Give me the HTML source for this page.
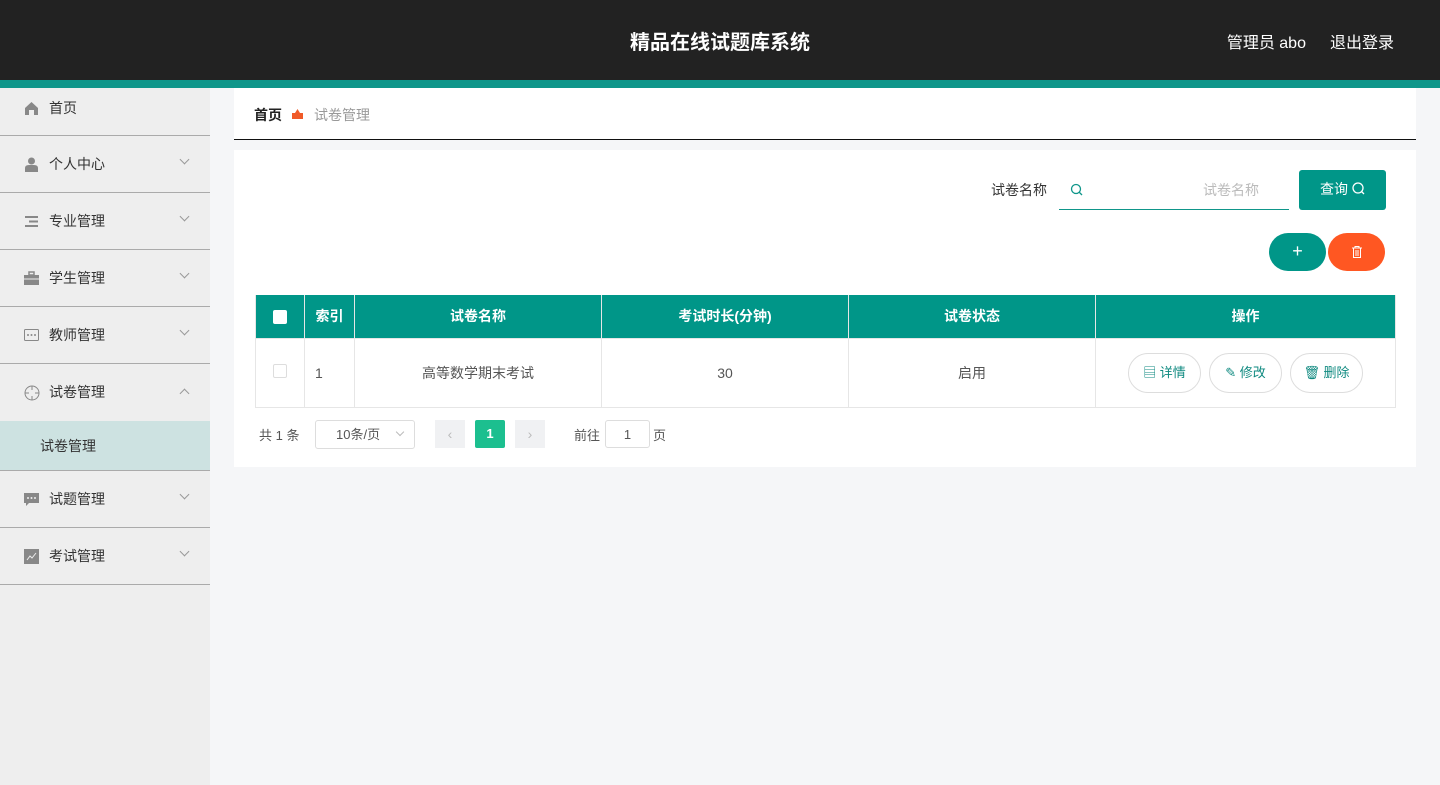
<!DOCTYPE html>
<html><head><meta charset="utf-8"><style>
*{box-sizing:border-box;margin:0;padding:0}
body{width:1440px;height:785px;overflow:hidden;background:#f5f6f8;font-family:"Liberation Sans","Noto Sans CJK SC",sans-serif;font-size:14px;color:#333;position:relative}
.hd{position:absolute;left:0;top:0;width:1440px;height:80px;background:#222;color:#fff}
.hd .t{position:absolute;left:0;width:1440px;top:26px;text-align:center;font-size:20px;font-weight:bold}
.hd .r{position:absolute;right:46px;top:29px;font-size:16px}
.bar{position:absolute;top:80px;left:0;width:1440px;height:8px;background:#0f968a}
.sb{position:absolute;left:0;top:88px;width:210px;height:697px;background:#eee}
.it{height:57px;border-bottom:1px solid #aaa;position:relative;font-size:14px;color:#333}
.it span{position:absolute;left:49px;top:18px}
.it i{position:absolute;left:24px;top:21px;width:15px;height:15px}
.it b{position:absolute;right:22px;top:20px;width:7px;height:7px;border-right:1px solid #999;border-bottom:1px solid #999;transform:rotate(45deg)}
.it b.up{transform:rotate(-135deg);top:26px}
.sub{height:50px;background:#cde2e1;border-bottom:1px solid #aaa;position:relative}
.sub span{position:absolute;left:40px;top:15px}
.bc{position:absolute;left:234px;top:88px;width:1182px;height:52px;background:#fff;border-bottom:1px solid #111;font-size:14px}
.main{position:absolute;left:234px;top:150px;width:1182px;height:317px;background:#fff}
table{position:absolute;left:21px;top:145px;width:1141px;border-collapse:collapse;font-size:14px}
th{background:#009688;color:#fff;height:43px;border:1px solid #e6e6e6;border-top:none;font-weight:bold;font-size:14px}
td{height:69px;border:1px solid #e6e6e6;text-align:center;color:#555}
.ob{display:inline-block;width:73px;height:40px;border:1px solid #ddd;border-radius:20px;line-height:38px;color:#0f8a80;font-size:13px;margin:0 2px}
</style></head><body>
<div class="hd"><div class="t">精品在线试题库系统</div><div class="r">管理员 abo<span style="margin-left:24px">退出登录</span></div></div>
<div class="bar"></div>
<div class="sb">
<div class="it" style="height:48px"><i style="top:13px"><svg width="15" height="15"><path d="M1 7L7.5 1 14 7V14H10V9H5V14H1Z" fill="#888"/></svg></i><span style="top:10px">首页</span></div>
<div class="it"><i><svg width="15" height="15"><circle cx="7.5" cy="4" r="3.5" fill="#888"/><path d="M1 15V11Q1 8 5 8H10Q14 8 14 11V15Z" fill="#888"/></svg></i><span>个人中心</span><b></b></div>
<div class="it"><i><svg width="15" height="15"><path d="M1 3H14M5 7.5H14M1 12H14" stroke="#888" stroke-width="2"/></svg></i><span>专业管理</span><b></b></div>
<div class="it"><i><svg width="15" height="15"><rect x="0" y="4" width="15" height="10" fill="#888"/><rect x="5" y="1" width="5" height="3" fill="none" stroke="#888" stroke-width="1.5"/><path d="M0 8H15" stroke="#eee"/></svg></i><span>学生管理</span><b></b></div>
<div class="it"><i><svg width="15" height="15"><rect x="0.5" y="1.5" width="14" height="11" rx="1" fill="none" stroke="#888"/><circle cx="4" cy="7" r="1" fill="#888"/><circle cx="7.5" cy="7" r="1" fill="#888"/><circle cx="11" cy="7" r="1" fill="#888"/></svg></i><span>教师管理</span><b></b></div>
<div class="it" style="border:none"><i><svg width="16" height="16"><circle cx="8" cy="8" r="7" fill="none" stroke="#888"/><path d="M8 1V5M8 11V15M1 8H5M11 8H15" stroke="#888"/></svg></i><span>试卷管理</span><b class="up"></b></div>
<div class="sub"><span>试卷管理</span></div>
<div class="it"><i><svg width="15" height="15"><path d="M0 1H15V11H5L2 14V11H0Z" fill="#888"/><circle cx="4" cy="6" r="1" fill="#eee"/><circle cx="7.5" cy="6" r="1" fill="#eee"/><circle cx="11" cy="6" r="1" fill="#eee"/></svg></i><span>试题管理</span><b></b></div>
<div class="it"><i><svg width="15" height="15"><rect width="15" height="15" fill="#888"/><path d="M3 11L6 7 8 9 12 4" stroke="#eee" fill="none"/></svg></i><span>考试管理</span><b></b></div>
</div>
<div class="bc"><span style="position:absolute;left:20px;top:17px;font-weight:bold;color:#222">首页</span><svg style="position:absolute;left:58px;top:21px" width="11" height="10"><path d="M0 4H11V10H0Z M3 4L5.5 0 8 4" fill="#f05a28"/></svg><span style="position:absolute;left:80px;top:17px;color:#999">试卷管理</span></div>
<div class="main">
<span style="position:absolute;left:757px;top:30px;color:#333;font-size:14px">试卷名称</span>
<div style="position:absolute;left:825px;top:20px;width:230px;height:40px;border-bottom:1px solid #0f968a"><svg style="position:absolute;left:11px;top:13px" width="13" height="13"><circle cx="6" cy="6" r="4.5" fill="none" stroke="#0f968a" stroke-width="1.3"/><path d="M9 9L12 12" stroke="#0f968a" stroke-width="1.3"/></svg><span style="position:absolute;right:30px;top:10px;color:#bbb;font-size:14px">试卷名称</span></div>
<div style="position:absolute;left:1065px;top:20px;width:87px;height:40px;background:#009688;border-radius:3px;color:#fff;line-height:38px;text-align:center;font-size:14px">查询 <svg width="13" height="13" style="vertical-align:-1px"><circle cx="6" cy="6" r="5" fill="none" stroke="#fff" stroke-width="1.3"/><path d="M9.5 9.5L12 12" stroke="#fff" stroke-width="1.3"/></svg></div>
<div style="position:absolute;left:1035px;top:83px;width:57px;height:38px;background:#009688;border-radius:19px;color:#fff;text-align:center;line-height:36px;font-size:18px">+</div>
<div style="position:absolute;left:1094px;top:83px;width:57px;height:38px;background:#ff5722;border-radius:19px;text-align:center;padding-top:12px"><svg width="10" height="12"><path d="M0 2H10M3 2V0.5H7V2M1.5 2V11.5H8.5V2M4 4V10M6 4V10" stroke="#fff" fill="none"/></svg></div>
<table>
<tr><th style="width:49px"><span style="display:inline-block;width:14px;height:14px;background:#fff;border-radius:2px;vertical-align:middle"></span></th><th style="width:50px">索引</th><th style="width:247px">试卷名称</th><th style="width:247px">考试时长(分钟)</th><th style="width:247px">试卷状态</th><th>操作</th></tr>
<tr><td><span style="display:inline-block;width:14px;height:14px;border:1px solid #ddd;border-radius:2px"></span></td><td style="text-align:left;padding-left:10px">1</td><td>高等数学期末考试</td><td>30</td><td>启用</td><td><span class="ob">▤ 详情</span><span class="ob" style="margin-left:6px">✎ 修改</span><span class="ob" style="margin-left:6px">🗑 删除</span></td></tr>
</table>
<span style="position:absolute;left:25px;top:275px;color:#555;font-size:13px">共 1 条</span>
<div style="position:absolute;left:81px;top:270px;width:100px;height:29px;border:1px solid #ddd;border-radius:3px;font-size:13px;color:#555;line-height:27px;padding-left:20px">10条/页<span style="position:absolute;right:11px;top:8px;width:6px;height:6px;border-right:1px solid #bbb;border-bottom:1px solid #bbb;transform:rotate(45deg)"></span></div>
<div style="position:absolute;left:201px;top:270px;width:30px;height:28px;background:#f0f1f3;color:#bbb;text-align:center;line-height:28px">‹</div>
<div style="position:absolute;left:241px;top:270px;width:30px;height:28px;background:#1cbf8f;border-radius:2px;color:#fff;text-align:center;line-height:28px;font-weight:bold;font-size:13px">1</div>
<div style="position:absolute;left:281px;top:270px;width:30px;height:28px;background:#f0f1f3;color:#bbb;text-align:center;line-height:28px">›</div>
<span style="position:absolute;left:340px;top:275px;color:#555;font-size:13px">前往</span>
<div style="position:absolute;left:371px;top:270px;width:45px;height:28px;border:1px solid #ddd;border-radius:3px;text-align:center;line-height:28px;font-size:13px;color:#555">1</div>
<span style="position:absolute;left:419px;top:275px;color:#555;font-size:13px">页</span>
</div>
</body></html>
